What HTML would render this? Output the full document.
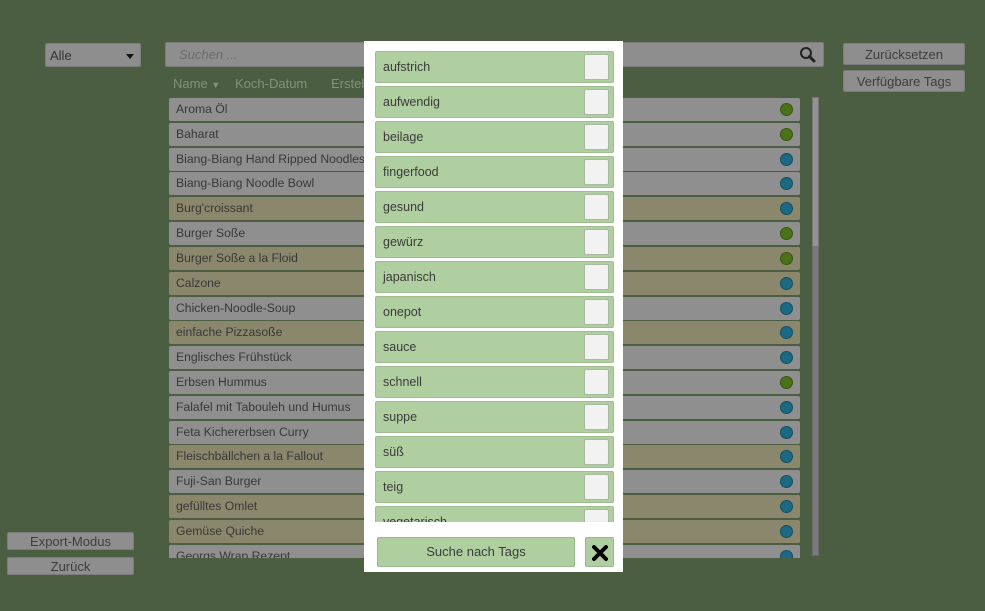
<!DOCTYPE html>
<html><head><meta charset="utf-8"><style>
*{box-sizing:border-box;margin:0;padding:0}
body{width:985px;height:611px;background:#4b5e42;font-family:"Liberation Sans",sans-serif;position:relative;overflow:hidden;font-size:12.5px;color:#3a3a3a}
.abs{position:absolute}
.btn{position:absolute;background:#8e8e8e;border:1px solid #7c7c7c;border-radius:2px;text-align:center;color:#3d3d3d;font-size:13px}
.row{position:absolute;left:169px;width:631px;height:23px;border-radius:2px;padding-left:7px;line-height:22px;font-size:12.2px;color:#383838;white-space:nowrap}
.g{background:#8f8f8f}.t{background:#8b876c}
.dot{position:absolute;left:611px;top:5px;width:13px;height:13px;border-radius:50%;border:1px solid rgba(0,0,0,.25)}
.dg{background:#4a7219}.db{background:#1b6982}
.tag{position:absolute;left:375px;width:239px;height:32px;background:#b0cfa0;border:1px solid #9ebe8f;border-radius:2px;padding-left:7px;line-height:30px;font-size:12.5px;color:#3b3b3b}
.cb{position:absolute;left:208px;top:2px;width:25px;height:26px;background:#f2f2f2;border:1px solid #a9b9a0;border-radius:2px}
</style></head><body>
<div class="btn" style="left:45px;top:43px;width:96px;height:24px;text-align:left;padding-left:4px;line-height:23px;color:#333">Alle<span class="abs" style="right:6px;top:10px;width:0;height:0;border-left:4px solid transparent;border-right:4px solid transparent;border-top:5px solid #111"></span></div>
<div class="btn" style="left:165px;top:42px;width:659px;height:25px;text-align:left;padding-left:13px;line-height:24px;font-style:italic;color:#6b6b6b">Suchen ...
<svg class="abs" style="left:633px;top:3px" width="18" height="17" viewBox="0 0 18 17"><circle cx="7" cy="7" r="5" fill="none" stroke="#222" stroke-width="2"/><path d="M10.5 10.5 L15 15" stroke="#222" stroke-width="3" stroke-linecap="round"/></svg></div>
<div class="btn" style="left:843px;top:43px;width:122px;height:22px;line-height:21px">Zurücksetzen</div>
<div class="btn" style="left:843px;top:70px;width:122px;height:22px;line-height:21px">Verfügbare Tags</div>
<div class="abs" style="left:173px;top:76px;color:#82927c;font-size:13px">Name <span style="font-size:9px">▼</span></div>
<div class="abs" style="left:235px;top:76px;color:#82927c;font-size:13px">Koch-Datum</div>
<div class="abs" style="left:331px;top:76px;color:#82927c;font-size:13px">Erstellt</div>
<div class="abs" style="left:160px;top:97px;width:650px;height:461px;overflow:hidden">
<div style="position:relative;left:-160px;top:-97px">
<div class="row g" style="top:98px">Aroma Öl<div class="dot dg"></div></div>
<div class="row g" style="top:123px">Baharat<div class="dot dg"></div></div>
<div class="row g" style="top:148px">Biang-Biang Hand Ripped Noodles<div class="dot db"></div></div>
<div class="row g" style="top:172px">Biang-Biang Noodle Bowl<div class="dot db"></div></div>
<div class="row t" style="top:197px">Burg'croissant<div class="dot db"></div></div>
<div class="row g" style="top:222px">Burger Soße<div class="dot dg"></div></div>
<div class="row t" style="top:247px">Burger Soße a la Floid<div class="dot dg"></div></div>
<div class="row t" style="top:272px">Calzone<div class="dot db"></div></div>
<div class="row g" style="top:297px">Chicken-Noodle-Soup<div class="dot db"></div></div>
<div class="row t" style="top:321px">einfache Pizzasoße<div class="dot db"></div></div>
<div class="row g" style="top:346px">Englisches Frühstück<div class="dot db"></div></div>
<div class="row g" style="top:371px">Erbsen Hummus<div class="dot dg"></div></div>
<div class="row g" style="top:396px">Falafel mit Tabouleh und Humus<div class="dot db"></div></div>
<div class="row g" style="top:421px">Feta Kichererbsen Curry<div class="dot db"></div></div>
<div class="row t" style="top:445px">Fleischbällchen a la Fallout<div class="dot db"></div></div>
<div class="row g" style="top:470px">Fuji-San Burger<div class="dot db"></div></div>
<div class="row t" style="top:495px">gefülltes Omlet<div class="dot db"></div></div>
<div class="row t" style="top:520px">Gemüse Quiche<div class="dot db"></div></div>
<div class="row g" style="top:545px">Georgs Wrap Rezept<div class="dot db"></div></div>
</div></div>
<div class="abs" style="left:812px;top:97px;width:7px;height:459px;background:#7a7a7a;border:1px solid #6a6a6a"></div>
<div class="abs" style="left:812px;top:97px;width:7px;height:150px;background:#939393;border:1px solid #777"></div>
<div class="btn" style="left:7px;top:532px;width:127px;height:18px;line-height:17px">Export-Modus</div>
<div class="btn" style="left:7px;top:557px;width:127px;height:18px;line-height:17px">Zurück</div>
<div class="abs" style="left:364px;top:41px;width:259px;height:531px;background:#fff"></div>
<div class="abs" style="left:364px;top:41px;width:259px;height:481px;overflow:hidden">
<div style="position:relative;left:-364px;top:-41px">
<div class="tag" style="top:51px">aufstrich<div class="cb"></div></div>
<div class="tag" style="top:86px">aufwendig<div class="cb"></div></div>
<div class="tag" style="top:121px">beilage<div class="cb"></div></div>
<div class="tag" style="top:156px">fingerfood<div class="cb"></div></div>
<div class="tag" style="top:191px">gesund<div class="cb"></div></div>
<div class="tag" style="top:226px">gewürz<div class="cb"></div></div>
<div class="tag" style="top:261px">japanisch<div class="cb"></div></div>
<div class="tag" style="top:296px">onepot<div class="cb"></div></div>
<div class="tag" style="top:331px">sauce<div class="cb"></div></div>
<div class="tag" style="top:366px">schnell<div class="cb"></div></div>
<div class="tag" style="top:401px">suppe<div class="cb"></div></div>
<div class="tag" style="top:436px">süß<div class="cb"></div></div>
<div class="tag" style="top:471px">teig<div class="cb"></div></div>
<div class="tag" style="top:506px">vegetarisch<div class="cb"></div></div>
</div></div>
<div class="abs" style="left:377px;top:537px;width:198px;height:30px;background:#b0cfa0;border:1px solid #9ab88b;border-radius:2px;text-align:center;line-height:28px;font-size:13px;color:#3b3b3b">Suche nach Tags</div>
<div class="abs" style="left:585px;top:537px;width:29px;height:30px;background:#b0cfa0;border:1px solid #9ab88b;border-radius:2px">
<svg class="abs" style="left:6px;top:7px" width="16" height="16" viewBox="0 0 16 16"><path d="M2 2 L14 14 M14 2 L2 14" stroke="#000" stroke-width="4" stroke-linecap="round"/></svg></div>
</body></html>
